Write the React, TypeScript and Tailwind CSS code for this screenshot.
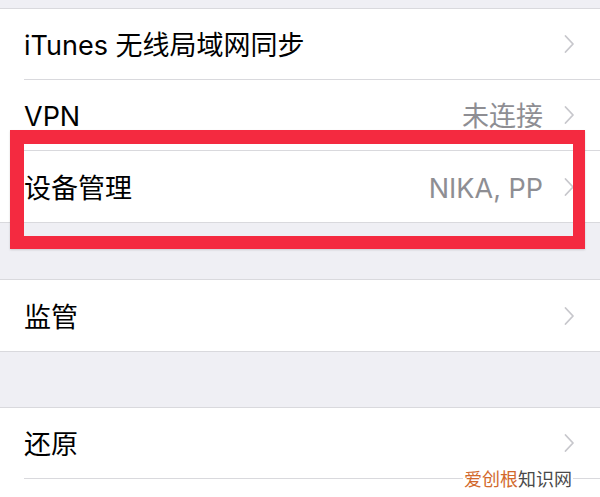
const FONT = "font-['Inter','Noto_Sans_CJK_SC',sans-serif]";

function Chevron() {
  return (
    <svg width="12" height="20" viewBox="0 0 12 20" fill="none" aria-hidden="true">
      <polyline points="2.5,2 10,10 2.5,18" stroke="#c7c7cc" strokeWidth="1.8" strokeLinecap="round" strokeLinejoin="round" />
    </svg>
  );
}

function Row({ title, detail, last }: { title: string; detail?: string; last?: boolean }) {
  return (
    <div className="pl-6 bg-white">
      <div
        className={`flex items-center h-[71px] pr-[25px] ${last ? "" : "border-b border-[#d9d9dd]"}`}
      >
        <span className="flex-1 pt-[3px] text-[27px] text-black leading-none">{title}</span>
        {detail && <span className="pt-[3px] text-[27px] text-[#8e8e93] leading-none mr-5">{detail}</span>}
        <Chevron />
      </div>
    </div>
  );
}

export default function App() {
  return (
    <div className={`relative w-[600px] h-[497px] overflow-hidden bg-[#efeff4] ${FONT}`}>
      <div className="h-2" />

      {/* group 1 */}
      <div className="border-y border-[#d9d9dd] bg-white">
        <Row title="iTunes 无线局域网同步" />
        <Row title="VPN" detail="未连接" />
        <Row title="设备管理" detail="NIKA, PP" last />
      </div>

      <div className="h-14" />

      {/* group 2 */}
      <div className="border-y border-[#d9d9dd] bg-white">
        <Row title="监管" last />
      </div>

      <div className="h-[55px]" />

      {/* group 3 */}
      <div className="border-t border-[#d9d9dd] bg-white">
        <Row title="还原" />
        <div className="h-10 bg-white" />
      </div>

      {/* red highlight */}
      <div className="absolute left-[10px] top-[130px] w-[575px] h-[119px] border-[14px] border-r-[12px] border-b-[13px] border-[#f42a40] shadow-[0_1px_2px_rgba(0,0,0,0.15)]" />

      {/* watermark */}
      <div className="absolute right-[27px] top-[468px] bg-white px-px text-[18px] leading-[20px] font-['Noto_Sans_CJK_SC',sans-serif]">
        <span className="text-[#d2692c]">爱创根</span>
        <span className="text-[#4a4a4a]">知识网</span>
      </div>
    </div>
  );
}
